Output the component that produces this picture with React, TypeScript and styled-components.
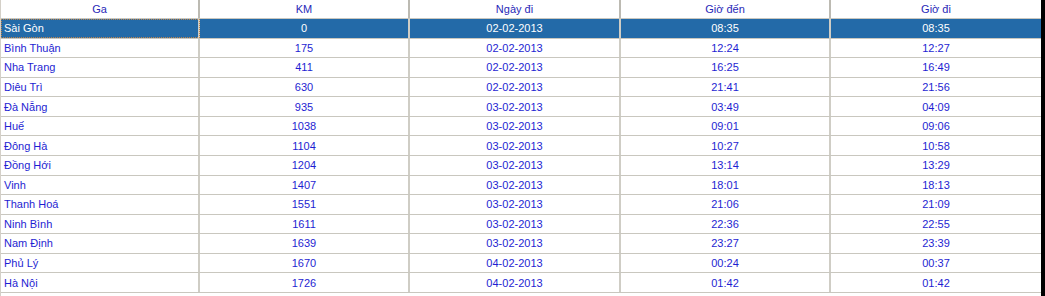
import styled, { createGlobalStyle } from "styled-components";

const GlobalStyle = createGlobalStyle`
    html, body {
        margin: 0;
        padding: 0;
        background: #000;
        overflow: hidden;
    }
`

const Frame = styled.div`
    width: 1041px;
    height: 296px;
    background-color: #fff;
    font-family: "Liberation Sans", Arial, sans-serif;
    font-size: 11px;
    color: #1e1ed2;
    display: grid;
    grid-template-rows: 19px 1fr;
    border-left: 1px solid #d4d0c8;
    box-sizing: border-box;
`

const Row = styled.div<{ $selected?: boolean }>`
    display: grid;
    grid-template-columns: 199px 210px 211px 210px 1fr;
    background-color: ${p => (p.$selected ? "#236aa8" : "#fff")};
    color: ${p => (p.$selected ? "#fff" : "#1e1ed2")};
    border-bottom: 1px solid #c9c7bf;
`

const Body = styled.div`
    display: grid;
    grid-template-rows: repeat(14, 19.57px);
`

const Cell = styled.div<{ $left?: boolean; $focus?: boolean }>`
    display: flex;
    align-items: center;
    justify-content: ${p => (p.$left ? "flex-start" : "center")};
    padding-left: ${p => (p.$left ? "3px" : "0")};
    border-right: 2px solid #cfcdc5;
    white-space: nowrap;
    box-sizing: border-box;
    ${p => p.$focus && `outline: 1px dotted #b8834e; outline-offset: -1px;`}

    &:last-child {
        border-right: none;
    }
`

const HeadCell = styled(Cell)`
    justify-content: center;
    padding-left: 0;
    color: #2828b8;
    border-right-color: #bcbab2;
`

const headers = ["Ga", "KM", "Ngày đi", "Giờ đến", "Giờ đi"]

const stations: [string, string, string, string, string][] = [
    ["Sài Gòn", "0", "02-02-2013", "08:35", "08:35"],
    ["Bình Thuận", "175", "02-02-2013", "12:24", "12:27"],
    ["Nha Trang", "411", "02-02-2013", "16:25", "16:49"],
    ["Diêu Trì", "630", "02-02-2013", "21:41", "21:56"],
    ["Đà Nẵng", "935", "03-02-2013", "03:49", "04:09"],
    ["Huế", "1038", "03-02-2013", "09:01", "09:06"],
    ["Đông Hà", "1104", "03-02-2013", "10:27", "10:58"],
    ["Đồng Hới", "1204", "03-02-2013", "13:14", "13:29"],
    ["Vinh", "1407", "03-02-2013", "18:01", "18:13"],
    ["Thanh Hoá", "1551", "03-02-2013", "21:06", "21:09"],
    ["Ninh Bình", "1611", "03-02-2013", "22:36", "22:55"],
    ["Nam Định", "1639", "03-02-2013", "23:27", "23:39"],
    ["Phủ Lý", "1670", "04-02-2013", "00:24", "00:37"],
    ["Hà Nội", "1726", "04-02-2013", "01:42", "01:42"],
]

const App = (): JSX.Element => {
    return (
        <>
            <GlobalStyle />
            <Frame>
                <Row>
                    {headers.map(h => <HeadCell key={h}>{h}</HeadCell>)}
                </Row>
                <Body>
                    {stations.map((s, i) => (
                        <Row key={s[0]} $selected={i === 0}>
                            <Cell $left $focus={i === 0}>{s[0]}</Cell>
                            <Cell>{s[1]}</Cell>
                            <Cell>{s[2]}</Cell>
                            <Cell>{s[3]}</Cell>
                            <Cell>{s[4]}</Cell>
                        </Row>
                    ))}
                </Body>
            </Frame>
        </>
    );
}

export default App;
